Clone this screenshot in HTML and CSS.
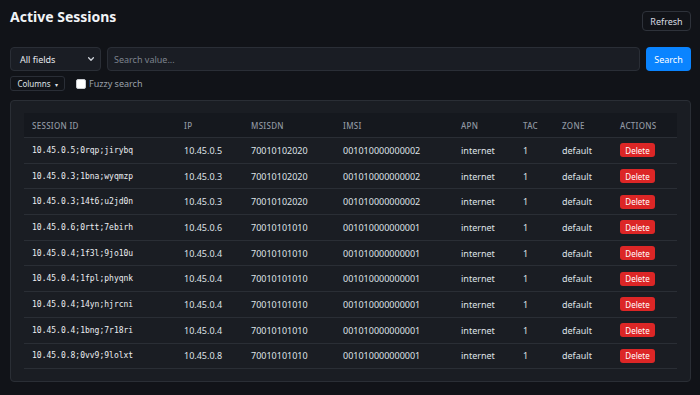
FILE: index.html
```html
<!DOCTYPE html>
<html>
<head>
    <meta charset="utf-8">
    <link rel="stylesheet" href="styles.css">
</head>
<body>
    <div class="header">
        <h1>Active Sessions</h1>
        <button class="btn-outline">Refresh</button>
    </div>

    <div class="search-row">
        <div class="select">
            <span>All fields</span>
            <svg width="8" height="8" viewBox="0 0 10 10"><path d="M2 3.5 L5 6.5 L8 3.5" fill="none" stroke="#cfd3da" stroke-width="1.6" stroke-linecap="round" stroke-linejoin="round"/></svg>
        </div>
        <input type="text" class="search-input" placeholder="Search value...">
        <button class="btn-primary">Search</button>
    </div>

    <div class="options-row">
        <button class="btn-small">Columns <span class="caret">▾</span></button>
        <label class="check"><span class="box"></span>Fuzzy search</label>
    </div>

    <div class="card">
        <table>
            <colgroup>
                <col class="c-id"><col class="c-ip"><col class="c-msisdn"><col class="c-imsi">
                <col class="c-apn"><col class="c-tac"><col class="c-zone"><col class="c-act">
            </colgroup>
            <thead>
                <tr>
                    <th>Session ID</th><th>IP</th><th>MSISDN</th><th>IMSI</th>
                    <th>APN</th><th>TAC</th><th>Zone</th><th>Actions</th>
                </tr>
            </thead>
            <tbody>
                <tr><td class="mono">10.45.0.5;0rqp;jirybq</td><td>10.45.0.5</td><td>70010102020</td><td>001010000000002</td><td>internet</td><td>1</td><td>default</td><td><button class="btn-danger">Delete</button></td></tr>
                <tr><td class="mono">10.45.0.3;1bna;wyqmzp</td><td>10.45.0.3</td><td>70010102020</td><td>001010000000002</td><td>internet</td><td>1</td><td>default</td><td><button class="btn-danger">Delete</button></td></tr>
                <tr><td class="mono">10.45.0.3;14t6;u2jd0n</td><td>10.45.0.3</td><td>70010102020</td><td>001010000000002</td><td>internet</td><td>1</td><td>default</td><td><button class="btn-danger">Delete</button></td></tr>
                <tr><td class="mono">10.45.0.6;0rtt;7ebirh</td><td>10.45.0.6</td><td>70010101010</td><td>001010000000001</td><td>internet</td><td>1</td><td>default</td><td><button class="btn-danger">Delete</button></td></tr>
                <tr><td class="mono">10.45.0.4;1f3l;9jo10u</td><td>10.45.0.4</td><td>70010101010</td><td>001010000000001</td><td>internet</td><td>1</td><td>default</td><td><button class="btn-danger">Delete</button></td></tr>
                <tr><td class="mono">10.45.0.4;1fpl;phyqnk</td><td>10.45.0.4</td><td>70010101010</td><td>001010000000001</td><td>internet</td><td>1</td><td>default</td><td><button class="btn-danger">Delete</button></td></tr>
                <tr><td class="mono">10.45.0.4;14yn;hjrcni</td><td>10.45.0.4</td><td>70010101010</td><td>001010000000001</td><td>internet</td><td>1</td><td>default</td><td><button class="btn-danger">Delete</button></td></tr>
                <tr><td class="mono">10.45.0.4;1bng;7r18ri</td><td>10.45.0.4</td><td>70010101010</td><td>001010000000001</td><td>internet</td><td>1</td><td>default</td><td><button class="btn-danger">Delete</button></td></tr>
                <tr><td class="mono">10.45.0.8;0vv9;9lolxt</td><td>10.45.0.8</td><td>70010101010</td><td>001010000000001</td><td>internet</td><td>1</td><td>default</td><td><button class="btn-danger">Delete</button></td></tr>
            </tbody>
        </table>
    </div>
</body>
</html>
```

FILE: styles.css
```css
body {
    margin: 0;
    padding: 8px 9px 10px 10px;
    background: #111318;
    color: #e2e5ea;
    font-family: 'Noto Sans', 'Open Sans', sans-serif;
    font-size: 9px;
}

button {
    font-family: inherit;
    cursor: pointer;
}

.header {
    display: flex;
    justify-content: space-between;
    align-items: flex-start;
    height: 39px;
}

.header h1 {
    margin: 0;
    font-size: 14px;
    font-weight: 700;
    line-height: 18px;
    color: #f1f3f6;
}

.btn-outline {
    margin-top: 3px;
    width: 49px;
    height: 20px;
    background: transparent;
    border: 1px solid #2e323a;
    border-radius: 4px;
    color: #d8dce2;
    font-size: 9px;
    padding: 0;
}

.search-row {
    display: flex;
    gap: 6px;
    height: 24px;
}

.select {
    width: 91px;
    box-sizing: border-box;
    display: flex;
    align-items: center;
    justify-content: space-between;
    padding: 0 5px 0 9px;
    background: #1a1d24;
    border: 1px solid #2a2e36;
    border-radius: 4px;
    color: #e6e8ec;
}

.search-input {
    flex: 1;
    box-sizing: border-box;
    background: #1a1d24;
    border: 1px solid #2a2e36;
    border-radius: 4px;
    padding: 0 6px;
    font-family: inherit;
    font-size: 9px;
    color: #e6e8ec;
}

.search-input::placeholder {
    color: #7d838d;
}

.btn-primary {
    width: 45px;
    background: #0a84ff;
    border: none;
    border-radius: 4px;
    color: #ffffff;
    font-size: 9px;
    padding: 0;
}

.options-row {
    display: flex;
    align-items: center;
    gap: 11px;
    margin-top: 5px;
    height: 15px;
}

.btn-small {
    height: 15px;
    width: 55px;
    padding: 0;
    background: transparent;
    border: 1px solid #2a2e36;
    border-radius: 3px;
    color: #dfe2e7;
    font-size: 8px;
}

.caret {
    font-size: 6px;
    margin-left: 2px;
}

.check {
    display: flex;
    align-items: center;
    gap: 3px;
    color: #9aa0a9;
    font-size: 9px;
}

.check .box {
    width: 8px;
    height: 8px;
    background: #ffffff;
    border-radius: 2px;
    border: 1px solid #c9ccd1;
}

.card {
    margin-top: 9px;
    background: #1a1d23;
    border: 1px solid #2a2e35;
    border-radius: 4px;
    padding: 12px 13px 12px 13px;
}

table {
    width: 100%;
    border-collapse: collapse;
    table-layout: fixed;
}

.c-id { width: 152px; }
.c-ip { width: 67px; }
.c-msisdn { width: 92px; }
.c-imsi { width: 118px; }
.c-apn { width: 62px; }
.c-tac { width: 39px; }
.c-zone { width: 58px; }

thead tr {
    background: #15181e;
}

th {
    height: 24px;
    padding: 0 8px;
    text-align: left;
    font-weight: 500;
    font-size: 8px;
    text-transform: uppercase;
    letter-spacing: 0.3px;
    color: #9097a1;
    border-bottom: 1px solid #2a2e35;
}

td {
    height: 24.7px;
    padding: 0 8px;
    border-bottom: 1px solid #2a2e35;
    color: #dfe2e7;
    white-space: nowrap;
}

.mono {
    font-family: 'DejaVu Sans Mono', 'Liberation Mono', monospace;
    font-size: 8px;
    color: #eceef2;
}

.btn-danger {
    height: 14px;
    width: 35px;
    padding: 0;
    background: #dc2626;
    border: none;
    border-radius: 3px;
    color: #ffffff;
    font-size: 8px;
}
```
